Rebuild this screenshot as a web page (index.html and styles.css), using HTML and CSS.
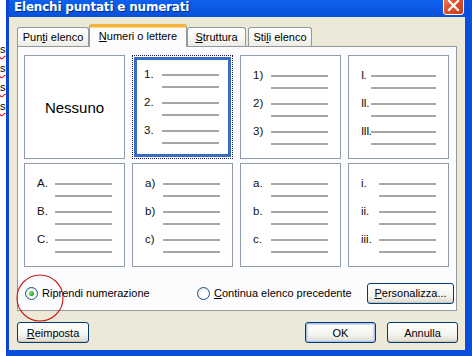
FILE: index.html
```html
<!DOCTYPE html>
<html lang="it">
<head>
    <meta charset="UTF-8">
    <title>Elenchi puntati e numerati</title>
    <link rel="stylesheet" href="styles.css">
</head>
<body>
    <div class="screen">
        <!-- document behind the dialog -->
        <div class="doc">
            <span class="word">s</span>
            <span class="word">s</span>
            <span class="word">s</span>
            <span class="word">s</span>
        </div>

        <div class="window">
            <div class="titlebar">
                <span class="title">Elenchi puntati e numerati</span>
                <span class="close">
                    <svg width="13" height="13" viewBox="0 0 13 13">
                        <path d="M2 2 L11 11 M11 2 L2 11" stroke="#fff" stroke-width="2.2" stroke-linecap="square"/>
                    </svg>
                </span>
            </div>

            <div class="dialog-body">
                <div class="tabs">
                    <div class="tab tab-bullets">Pun<u>t</u>i elenco</div>
                    <div class="tab tab-numbers active"><u>N</u>umeri o lettere</div>
                    <div class="tab tab-outline"><u>S</u>truttura</div>
                    <div class="tab tab-styles">Sti<u>l</u>i elenco</div>
                </div>

                <div class="panel">
                    <div class="grid">
                        <div class="cell cell-none">Nessuno</div>

                        <div class="cell selected">
                            <div class="entry"><span class="num">1.</span><div class="lines"><i></i><i></i></div></div>
                            <div class="entry"><span class="num">2.</span><div class="lines"><i></i><i></i></div></div>
                            <div class="entry"><span class="num">3.</span><div class="lines"><i></i><i></i></div></div>
                        </div>

                        <div class="cell">
                            <div class="entry"><span class="num">1)</span><div class="lines"><i></i><i></i></div></div>
                            <div class="entry"><span class="num">2)</span><div class="lines"><i></i><i></i></div></div>
                            <div class="entry"><span class="num">3)</span><div class="lines"><i></i><i></i></div></div>
                        </div>

                        <div class="cell cell-roman">
                            <div class="entry"><span class="num">I.</span><div class="lines"><i></i><i></i></div></div>
                            <div class="entry"><span class="num">II.</span><div class="lines"><i></i><i></i></div></div>
                            <div class="entry"><span class="num">III.</span><div class="lines"><i></i><i></i></div></div>
                        </div>

                        <div class="cell">
                            <div class="entry"><span class="num">A.</span><div class="lines"><i></i><i></i></div></div>
                            <div class="entry"><span class="num">B.</span><div class="lines"><i></i><i></i></div></div>
                            <div class="entry"><span class="num">C.</span><div class="lines"><i></i><i></i></div></div>
                        </div>

                        <div class="cell">
                            <div class="entry"><span class="num">a)</span><div class="lines"><i></i><i></i></div></div>
                            <div class="entry"><span class="num">b)</span><div class="lines"><i></i><i></i></div></div>
                            <div class="entry"><span class="num">c)</span><div class="lines"><i></i><i></i></div></div>
                        </div>

                        <div class="cell">
                            <div class="entry"><span class="num">a.</span><div class="lines"><i></i><i></i></div></div>
                            <div class="entry"><span class="num">b.</span><div class="lines"><i></i><i></i></div></div>
                            <div class="entry"><span class="num">c.</span><div class="lines"><i></i><i></i></div></div>
                        </div>

                        <div class="cell">
                            <div class="entry"><span class="num">i.</span><div class="lines"><i></i><i></i></div></div>
                            <div class="entry"><span class="num">ii.</span><div class="lines"><i></i><i></i></div></div>
                            <div class="entry"><span class="num">iii.</span><div class="lines"><i></i><i></i></div></div>
                        </div>
                    </div>

                    <div class="options">
                        <label class="radio radio-restart"><span class="radio-box checked"></span><span>Riprendi numerazione</span></label>
                        <label class="radio"><span class="radio-box"></span><span><u>C</u>ontinua elenco precedente</span></label>
                        <button class="btn btn-custom"><u>P</u>ersonalizza...</button>
                    </div>
                </div>

                <div class="footer">
                    <button class="btn btn-reset"><u>R</u>eimposta</button>
                    <button class="btn btn-ok">OK</button>
                    <button class="btn btn-cancel">Annulla</button>
                </div>
            </div>
        </div>

        <!-- hand drawn mark over the first option -->
        <svg class="mark" width="50" height="50" viewBox="0 0 50 50">
            <ellipse cx="24" cy="24" rx="23" ry="23" fill="none" stroke="#c81a1a" stroke-width="1.1"/>
        </svg>
    </div>
</body>
</html>
```

FILE: styles.css
```css
:root {
    --frame-blue: #0a4fdc;
    --dialog-bg: #ece9d8;
    --tab-border: #919b9c;
    --panel-bg: #fcfcfe;
    --line-gray: #a6a6a6;
}

* {
    margin: 0;
    padding: 0;
    box-sizing: border-box;
}

body {
    font-family: 'Liberation Sans', Arial, sans-serif;
    font-size: 11px;
    color: #000;
}

.screen {
    position: relative;
    display: flex;
    width: 472px;
    height: 356px;
    overflow: hidden;
}

/* document strip on the left */
.doc {
    width: 6px;
    background-color: #fff;
    padding-top: 40px;
    display: flex;
    flex-direction: column;
    overflow: hidden;
}

.word {
    font-size: 11px;
    line-height: 19px;
    height: 19px;
    text-decoration: underline wavy #e00000;
    text-underline-offset: 2px;
}

.window {
    flex-grow: 1;
    display: flex;
    flex-direction: column;
    border-left: 3px solid #0b46d0;
    border-right: 7px solid var(--frame-blue);
    border-bottom: 6px solid var(--frame-blue);
}

.titlebar {
    height: 17px;
    display: flex;
    align-items: flex-start;
    padding-left: 5px;
    padding-top: 1px;
    background: linear-gradient(#0f62ee, #0a58e4 50%, #0850d8);
}

.title {
    color: #fff;
    font-family: 'DejaVu Sans', sans-serif;
    font-weight: bold;
    font-size: 12px;
    line-height: 13px;
    letter-spacing: -0.2px;
    text-shadow: 1px 1px 0 #0a2a8a;
}

.close {
    margin-left: auto;
    margin-right: 1px;
    margin-top: -7px;
    width: 21px;
    height: 21px;
    border: 1px solid #fff;
    border-radius: 3px;
    background: linear-gradient(135deg, #f08a64, #e0512a 45%, #c5391a);
    display: flex;
    align-items: center;
    justify-content: center;
    padding-top: 2px;
}

.dialog-body {
    flex-grow: 1;
    background-color: var(--dialog-bg);
    padding: 7px 8px 0 8px;
    display: flex;
    flex-direction: column;
}

/* tabs */
.tabs {
    height: 22px;
    display: flex;
    align-items: flex-end;
}

.tab {
    height: 19px;
    line-height: 18px;
    text-align: center;
    border: 1px solid var(--tab-border);
    border-bottom: none;
    border-radius: 3px 3px 0 0;
    background: linear-gradient(#fff, #f7f7f4 60%, #ecebe5);
}

.tab-bullets { width: 72px; }
.tab-numbers { width: 98px; }
.tab-outline { width: 59px; }
.tab-styles { width: 64px; margin-left: 2px; }

.tab.active {
    position: relative;
    z-index: 1;
    height: 23px;
    margin-bottom: -1px;
    padding-bottom: 2px;
    border-top: 3px solid #f4b33a;
    background: var(--panel-bg);
    box-shadow: inset 0 1px 0 #ffd98a;
}

.panel {
    border: 1px solid var(--tab-border);
    background-color: var(--panel-bg);
    padding: 8px 6px 7px 6px;
}

.grid {
    display: grid;
    grid-template-columns: repeat(4, 101px);
    grid-auto-rows: 104px;
    column-gap: 7px;
    row-gap: 4px;
}

.cell {
    background-color: #fff;
    border: 1px solid #8f9cac;
    padding-top: 19px;
}

.cell-none {
    padding-top: 0;
    display: flex;
    align-items: center;
    justify-content: center;
    font-size: 15px;
}

.cell.selected {
    border: 1px dotted #1a1a40;
    box-shadow: inset 0 0 0 1px #fff, inset 0 0 0 4px #3a6cc4;
    padding-top: 18px;
}

.entry {
    display: flex;
    align-items: flex-start;
    margin-bottom: 14px;
}

.num {
    width: 18px;
    margin-left: 12px;
    margin-top: -6px;
    font-size: 11.5px;
    line-height: 12px;
    white-space: nowrap;
    color: #111;
}

.selected .num {
    margin-left: 11px;
}

.lines {
    width: 57px;
    display: flex;
    flex-direction: column;
    gap: 10px;
}

.lines i {
    display: block;
    height: 2px;
    background-color: var(--line-gray);
}

.cell-roman .num {
    width: 10px;
    letter-spacing: -0.6px;
}

.cell-roman .lines {
    width: 65px;
}

/* options below the grid */
.options {
    margin-top: 16px;
    margin-right: -4px;
    height: 20px;
    display: flex;
    align-items: center;
}

.radio {
    display: flex;
    align-items: center;
    gap: 4px;
    white-space: nowrap;
}

.radio-restart {
    width: 172px;
    margin-left: 1px;
}

.radio-box {
    width: 13px;
    height: 13px;
    border-radius: 50%;
    border: 1px solid #1c5180;
    background: radial-gradient(circle at 60% 60%, #fff 30%, #e6e6df 80%, #d3d3ca);
    display: flex;
    align-items: center;
    justify-content: center;
}

.radio-box.checked::after {
    content: "";
    width: 5px;
    height: 5px;
    border-radius: 50%;
    background: radial-gradient(circle at 35% 35%, #7be07a, #21a121 70%);
}

.btn {
    height: 21px;
    font-family: inherit;
    font-size: 11px;
    color: #000;
    border: 1px solid #003c74;
    border-radius: 3px;
    background: linear-gradient(#ffffff, #f4f4f0 60%, #e3e0d6 90%, #d6d0c5);
    box-shadow: inset 0 -1px 0 #cdc8bb;
}

.btn-custom {
    margin-left: auto;
    width: 87px;
}

.footer {
    margin-top: 11px;
    display: flex;
    align-items: center;
}

.btn-reset {
    width: 72px;
}

.btn-ok {
    width: 71px;
    margin-left: auto;
    box-shadow: inset 0 0 0 1px #a7c2ee, inset 0 0 0 2px #cfdcf6;
}

.btn-cancel {
    width: 71px;
    margin-left: 11px;
    margin-right: -1px;
}

.mark {
    position: absolute;
    left: 16px;
    top: 274px;
}
```
